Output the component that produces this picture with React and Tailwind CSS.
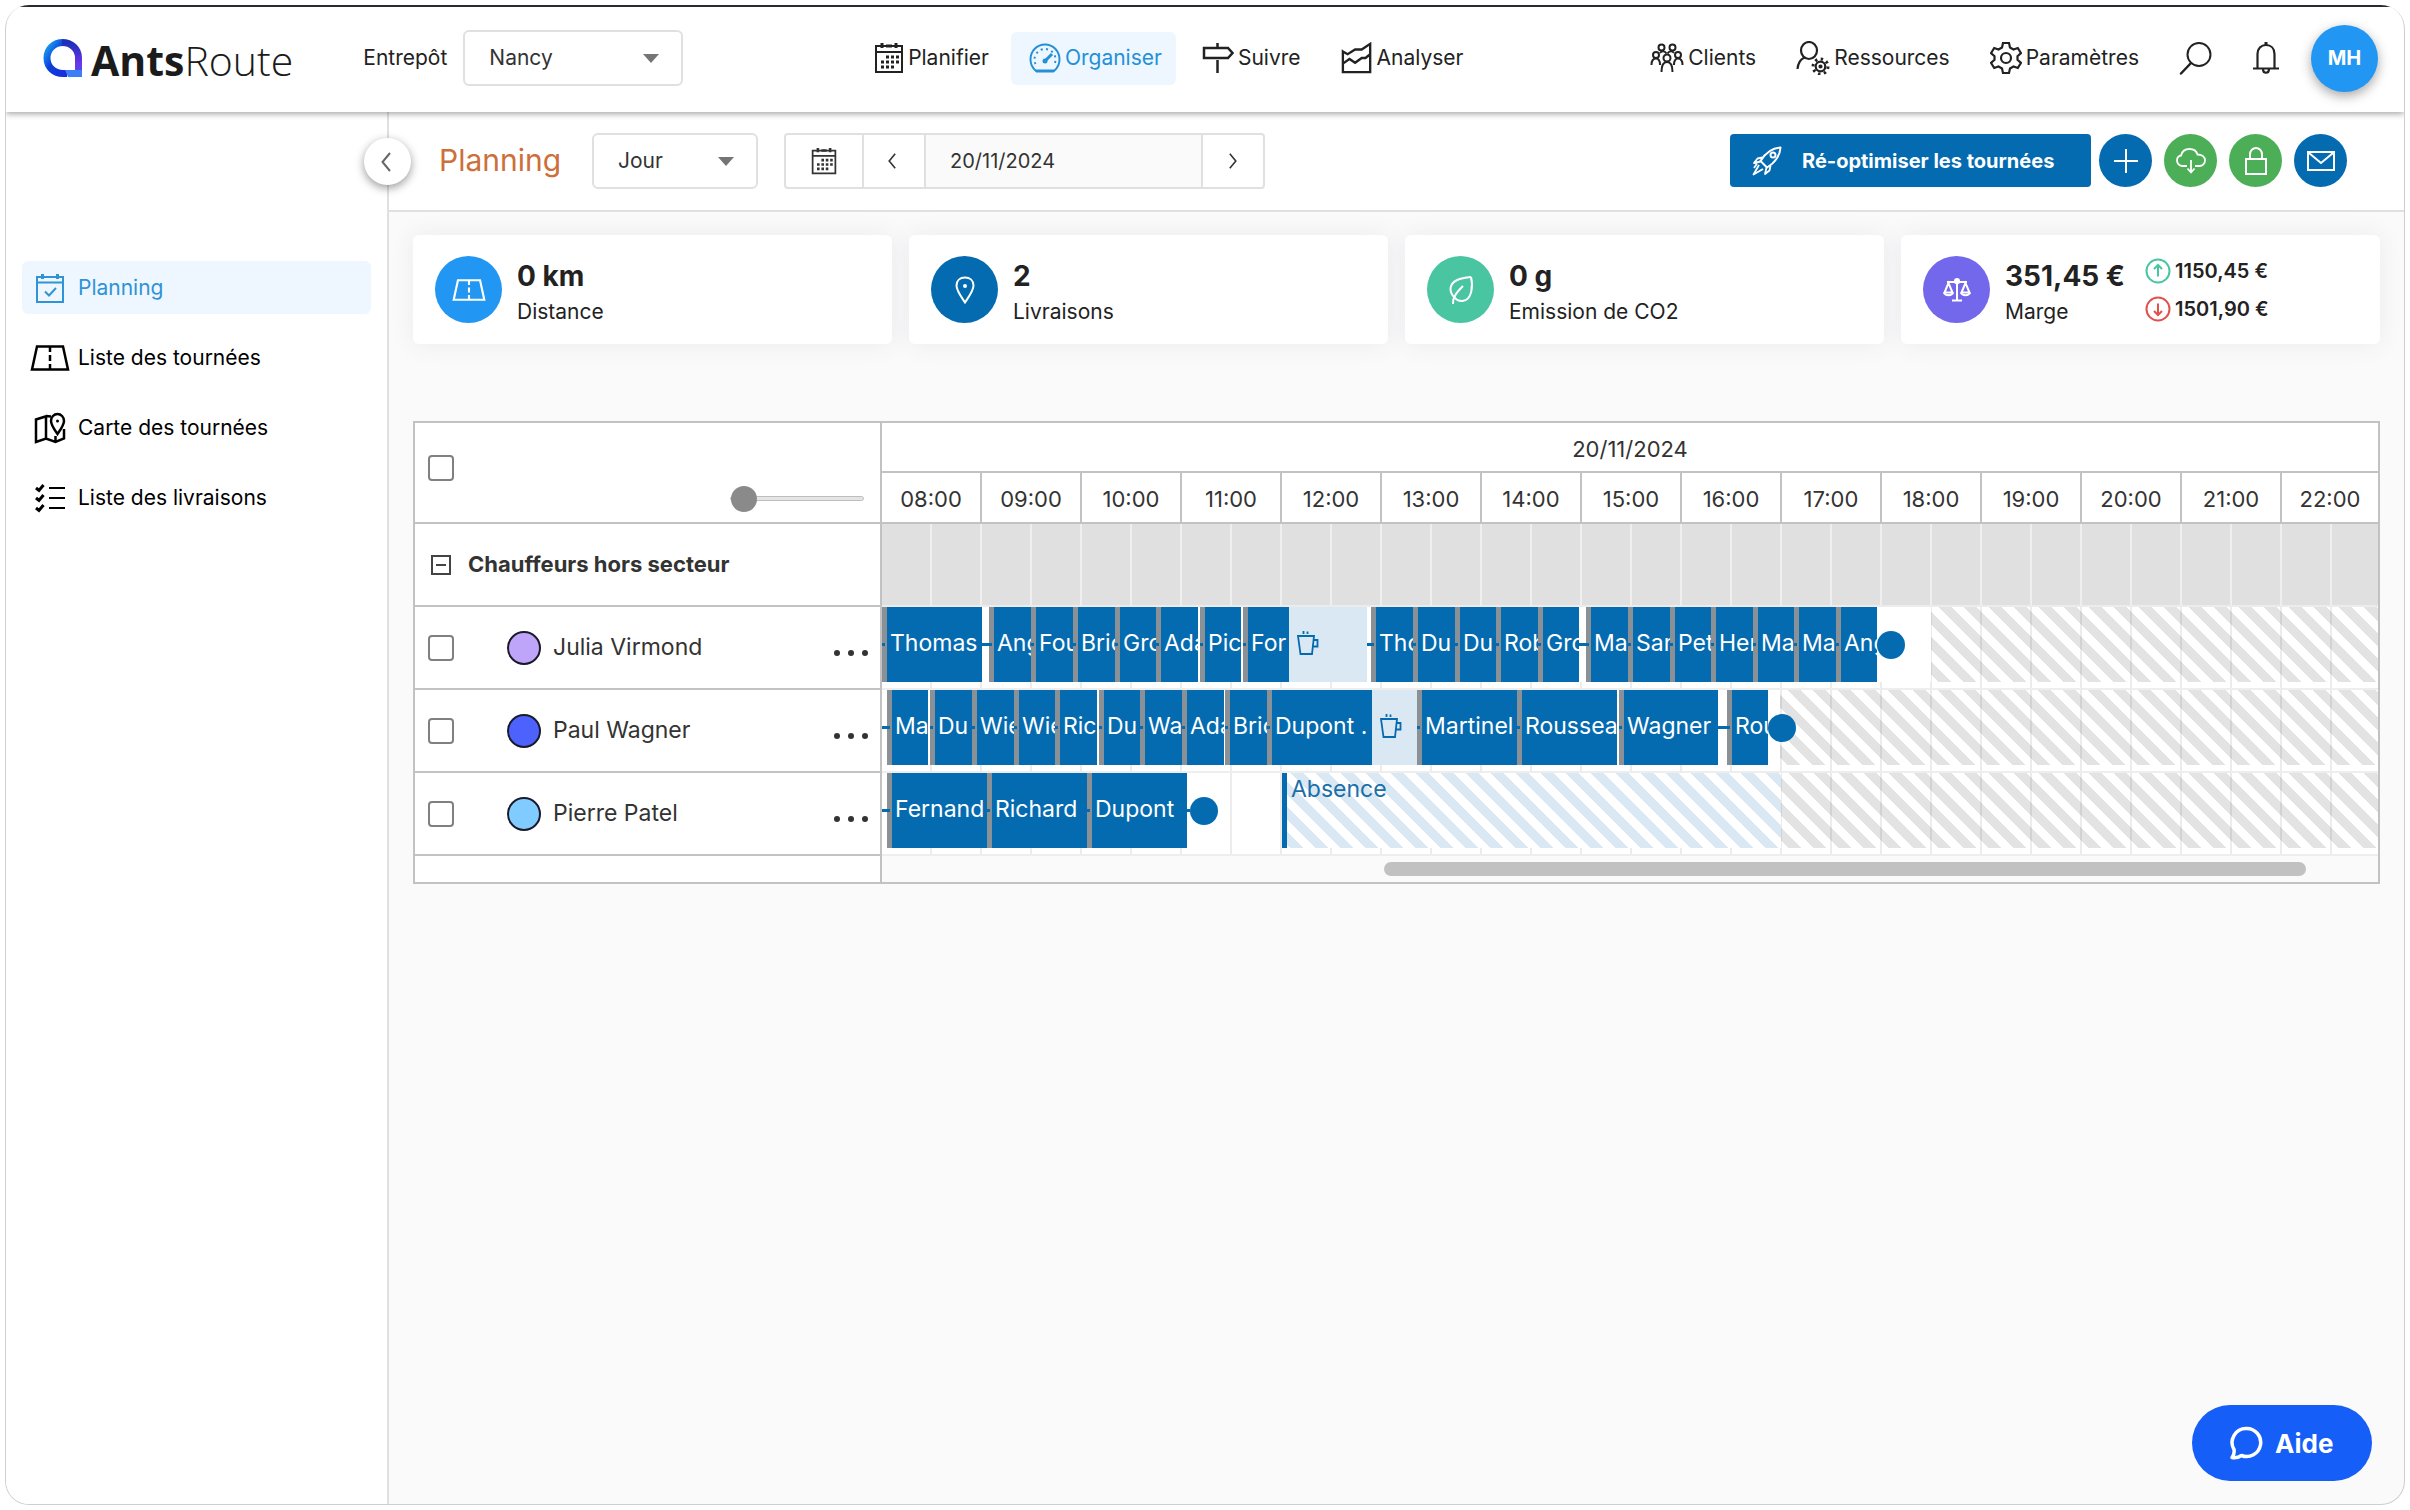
import React from "react";

const stroke = { fill: "none", stroke: "currentColor", strokeWidth: 2 };

function LogoMark() {
  return (
    <svg viewBox="0 0 40 40" className="h-10 w-10">
      <defs>
        <linearGradient id="markBlue" x1="0" y1="0" x2="1" y2="1">
          <stop offset="0" stopColor="#1aa5f5" />
          <stop offset="0.45" stopColor="#0b3fd8" />
          <stop offset="1" stopColor="#1b2be0" />
        </linearGradient>
        <linearGradient id="markViolet" x1="0" y1="0" x2="0" y2="1">
          <stop offset="0" stopColor="#1d2fb8" />
          <stop offset="0.6" stopColor="#6a35e8" />
          <stop offset="1" stopColor="#3f5bf5" />
        </linearGradient>
      </defs>
      <path d="M24 35.5H20C11 35.5 4 29 4 20S11 4.500 20 4.500" fill="none" stroke="url(#markBlue)" strokeWidth="7" />
      <path d="M19 4.500C28.500 4.500 35.500 11 35.500 20V39" fill="none" stroke="url(#markViolet)" strokeWidth="7" />
      <path d="M22 32H39V39H25Z" fill="#3d7df8" />
    </svg>
  );
}

function CalendarIcon({ className }) {
  return (
    <svg viewBox="0 0 30 32" className={className} {...stroke}>
      <path d="M2 4H28V30H2ZM2 10H28" />
      <path d="M8 1V6M22 1V6M12 4H18" strokeWidth="3" />
      <path d="M12 15H26M7 20H26M7 25H20" strokeWidth="3" strokeDasharray="3 2" />
    </svg>
  );
}

function GaugeIcon() {
  return (
    <svg viewBox="0 0 32 32" className="h-8 w-8" {...stroke}>
      <path d="M7 29C3.500 26 1.500 22 1.500 17.500C1.500 9 8 2.500 16 2.500S30.500 9 30.500 17.500C30.500 22 28.500 26 25 29Z" />
      <path d="M7 29H25" strokeWidth="3" />
      <path d="M6.500 22A10.500 10.500 0 1 1 25.500 22" strokeDasharray="2 3.500" />
      <path d="M16 19L23 12" strokeWidth="3" />
      <circle cx="16" cy="19" r="2.500" fill="currentColor" stroke="none" />
    </svg>
  );
}

function SignIcon() {
  return (
    <svg viewBox="0 0 32 32" className="h-8 w-8" {...stroke} strokeWidth="2.500">
      <path d="M2 6H26L30.500 11L26 16H2ZM15.500 1V6M15.500 18V31" />
    </svg>
  );
}

function ChartIcon() {
  return (
    <svg viewBox="0 0 34 32" className="h-8 w-8" {...stroke} strokeWidth="2.500">
      <path d="M2 9L7 12L15 7H22L31 1V31H2ZM2 22L9 17L15 21L22 16H26L31 12" />
    </svg>
  );
}

function PeopleIcon() {
  return (
    <svg viewBox="0 0 34 30" className="h-[30px] w-[34px]" {...stroke}>
      <circle cx="11.500" cy="4.500" r="3" />
      <circle cx="22.500" cy="4.500" r="3" />
      <circle cx="6" cy="12" r="3" />
      <circle cx="28" cy="12" r="3" />
      <circle cx="17" cy="15" r="3.500" />
      <path d="M1.500 22C1.500 18 3 15.500 6 15.500S10 18 10 22M32.500 22C32.500 18 31 15.500 28 15.500S24 18 24 22M11.500 29C11.500 23 13 19 17 19S22.500 23 22.500 29M10 10C12 7.500 15 8 16.500 10.500M24 10C22 7.500 19 8 17.500 10.500" />
    </svg>
  );
}

function UserGearIcon() {
  return (
    <svg viewBox="0 0 34 34" className="h-[34px] w-[34px]" {...stroke} strokeWidth="2.200">
      <ellipse cx="13" cy="9.500" rx="8" ry="8.500" />
      <path d="M1.500 28C2 22 4 18.500 8.500 16.500" />
      <circle cx="24.500" cy="25.500" r="4.800" />
      <circle cx="24.500" cy="25.500" r="7.500" strokeDasharray="2.400 3.490" strokeWidth="3" />
      <circle cx="24.500" cy="25.500" r="1" fill="currentColor" />
    </svg>
  );
}

function GearIcon() {
  return (
    <svg viewBox="0 0 32 34" className="h-[34px] w-8" {...stroke} strokeWidth="2.200">
      <path d="M13 2H19L20 6.500L23.500 8.500L27.800 7L31 12.200L27.500 15.200V18.800L31 21.800L27.800 27L23.500 25.500L20 27.500L19 32H13L12 27.500L8.500 25.500L4.200 27L1 21.800L4.500 18.800V15.200L1 12.200L4.200 7L8.500 8.500L12 6.500Z" />
      <circle cx="16" cy="17" r="5" />
    </svg>
  );
}

function SearchIcon() {
  return (
    <svg viewBox="0 0 34 34" className="h-[34px] w-[34px]" {...stroke} strokeLinecap="round">
      <circle cx="20" cy="13.500" r="11.500" />
      <path d="M12 22L2 32.500" strokeWidth="2.500" />
    </svg>
  );
}

function BellIcon() {
  return (
    <svg viewBox="0 0 26 34" className="h-[34px] w-[26px]" {...stroke} strokeWidth="2.200">
      <path d="M4.500 27V13C4.500 7.500 8 4 13 4S21.500 7.500 21.500 13V27M0 27.500H26M10 28C10 33 16 33 16 28" />
      <path d="M13 1V4" strokeWidth="3" />
    </svg>
  );
}

function PlanningIcon() {
  return (
    <svg viewBox="0 0 32 32" className="h-8 w-8" {...stroke}>
      <path d="M3 5H29V30H3ZM3 10.500H29M11 19.500L15 23.500L22 16" />
      <path d="M8.500 2V7M23.500 2V7" strokeWidth="3" />
    </svg>
  );
}

function RoadIcon({ className, weight }) {
  return (
    <svg viewBox="0 0 40 28" className={className} {...stroke} strokeWidth={weight}>
      <path d="M7 2.500H33L38 25.500H2ZM20 3V8M20 11V17M20 20V25" />
    </svg>
  );
}

function MapIcon() {
  return (
    <svg viewBox="0 0 32 32" className="h-8 w-8" {...stroke} strokeWidth="2.500">
      <path d="M13 4L2 7.500V30L12 26.500L21.500 30L30 26.500V17M12 4V26.500M17 4.500L12 4M21.500 24V30" />
      <path d="M23.500 22C20 17 17 13 17 9C17 5 20 2 23.500 2S30 5 30 9C30 13 27 17 23.500 22Z" />
      <circle cx="23.500" cy="9" r="1.500" fill="currentColor" stroke="none" />
    </svg>
  );
}

function ChecklistIcon() {
  return (
    <svg viewBox="0 0 32 32" className="h-8 w-8" {...stroke} strokeWidth="2.200">
      <path d="M15 6H31M15 16H31M15 26H31" />
      <path d="M2 6L5 8.500L9.500 3M2 16L5 18.500L9.500 13M2 26L5 28.500L9.500 23" strokeWidth="3" />
    </svg>
  );
}

function RocketIcon() {
  return (
    <svg viewBox="0 0 30 30" className="h-[30px] w-[30px]" {...stroke} strokeLinejoin="round">
      <path d="M28.500 1.500C20 2 14 6 8.500 15L15 21.500C24 16 28 10 28.500 1.500Z" />
      <circle cx="21" cy="9" r="2.500" />
      <path d="M10.500 11.500L5.500 12.500L2 17L8.500 15.500M18.500 19.500L17.500 24.500L13 28L14.500 21.500M7 19L1.500 28.500L11 23M5 17.500L2 22" strokeWidth="1.800" />
    </svg>
  );
}

function Chevron({ left, className }) {
  return (
    <svg viewBox="0 0 10 20" className={className} {...stroke}>
      <path d={left ? "M9 1L1.500 10L9 19" : "M1 1L8.500 10L1 19"} />
    </svg>
  );
}

function PlusIcon() {
  return (
    <svg viewBox="0 0 24 24" className="h-6 w-6" {...stroke}>
      <path d="M12 0V24M0 12H24" />
    </svg>
  );
}

function CloudIcon() {
  return (
    <svg viewBox="0 0 30 26" className="h-[26px] w-[30px]" {...stroke} strokeWidth="1.800">
      <path d="M11 18H6.500C3.500 18 1 15.500 1 12.500C1 10 2.500 8 5 7.500C6 3.500 9.500 1 13.500 1C17.500 1 20.500 3 21.500 6.500C25.500 6.500 29 8.500 29 12.500C29 15.500 26.500 18 23.500 18H19M15 12V24M11.500 20.500L15 24.500L18.500 20.500" />
    </svg>
  );
}

function LockIcon() {
  return (
    <svg viewBox="0 0 22 28" className="h-7 w-[22px]" {...stroke}>
      <path d="M1 12H21V27H1ZM5 12V7.500C5 4 7.500 1 11 1S17 4 17 7.500V12" />
    </svg>
  );
}

function MailIcon() {
  return (
    <svg viewBox="0 0 28 20" className="h-5 w-7" {...stroke}>
      <path d="M1 1H27V19H1ZM2 2L14 12L26 2" />
    </svg>
  );
}

function PinIcon() {
  return (
    <svg viewBox="0 0 20 28" className="h-7 w-5" {...stroke}>
      <path d="M10 26.500C5 19 1.500 14.500 1.500 9.500C1.500 4.500 5 1.500 10 1.500S18.500 4.500 18.500 9.500C18.500 14.500 15 19 10 26.500Z" />
      <circle cx="10" cy="10" r="2" fill="currentColor" stroke="none" />
    </svg>
  );
}

function LeafIcon() {
  return (
    <svg viewBox="0 0 26 30" className="h-[30px] w-[26px]" {...stroke}>
      <path d="M23 2C13 3 3 5 2.500 14C2.500 17 4 20 6.500 22.500M23 2C25 10 24.500 25 14.500 26C11.500 26.500 8.500 25 6.500 22.500M15 11C9 17 4.500 22 5 29" />
    </svg>
  );
}

function ScaleIcon() {
  return (
    <svg viewBox="0 0 28 24" className="h-6 w-7" {...stroke}>
      <path d="M14 2V22M9 22.500H19M4 4H11C12.500 5 15.500 5 17 4H24M5.500 5L1.500 14.500H9.500ZM22.500 5L18.500 14.500H26.500Z" />
      <path d="M1 14.500C2 18 9 18 10 14.500M18 14.500C19 18 26 18 27 14.500" />
      <circle cx="14" cy="3" r="2" />
    </svg>
  );
}

function ArrowCircle({ down, className }) {
  return (
    <svg viewBox="0 0 26 26" className={className} {...stroke}>
      <circle cx="13" cy="13" r="11.500" />
      <path d={down ? "M13 7.500V18.500M9 15L13 19L17 15" : "M13 18.500V7.500M9 11L13 7L17 11"} />
    </svg>
  );
}

function CupIcon() {
  return (
    <svg viewBox="0 0 22 26" className="mb-1 ml-2 h-[26px] w-[22px] shrink-0 text-[#056bb0]" {...stroke} strokeWidth="1.800">
      <path d="M1 6H17L15 24H3.500ZM16.500 10H20.500V16.500H16" />
      <path d="M6.500 1V4M10.500 1.500V4" />
    </svg>
  );
}

function Picker({ id, label, value, className }) {
  return (
    <div className={`relative ${className}`}>
      <select
        id={id}
        aria-label={label}
        defaultValue={value}
        className="h-14 w-full appearance-none rounded-md border-2 border-[#e0e0e0] bg-white pl-6 text-[21px] text-[#333]"
      >
        <option>{value}</option>
      </select>
      <svg viewBox="0 0 16 9" className="pointer-events-none absolute top-6 right-6 h-[9px] w-4">
        <path d="M0 0H16L8 9Z" fill="#757575" />
      </svg>
    </div>
  );
}

function NavItem({ icon, label, active }) {
  return (
    <a
      href="#"
      className={`flex h-[53px] items-center gap-1 rounded-md pr-3.5 pl-[18px] ${active ? "bg-[#eef7ff] text-[#2490d8]" : "text-[#222]"}`}
    >
      {icon}
      <span>{label}</span>
    </a>
  );
}

function TopLink({ icon, label }) {
  return (
    <a href="#" className="flex items-center gap-1 text-[#222]">
      {icon}
      <span>{label}</span>
    </a>
  );
}

function Header() {
  return (
    <header className="relative z-20 flex h-[107px] shrink-0 items-center justify-between border-t-2 border-[#2a2a30] bg-white pr-[26px] pb-[3px] pl-[37px] shadow-[0_2px_6px_rgba(0,0,0,0.35)]">
      <div className="flex items-center">
        <a href="#" aria-label="AntsRoute" className="flex items-center gap-2 font-['Open_Sans',sans-serif] text-[41px] leading-none text-[#1b1b1b]">
          <LogoMark />
          <span className="pt-1">
            <span className="font-bold">Ants</span>
            <span className="font-light">Route</span>
          </span>
        </a>
        <label htmlFor="depot" className="mr-4 ml-[70px] text-[#222]">Entrepôt</label>
        <Picker id="depot" label="Entrepôt" value="Nancy" className="w-[220px]" />
      </div>
      <nav className="flex items-center gap-2">
        <NavItem icon={<CalendarIcon className="h-8 w-[30px]" />} label="Planifier" />
        <NavItem icon={<GaugeIcon />} label="Organiser" active />
        <NavItem icon={<SignIcon />} label="Suivre" />
        <NavItem icon={<ChartIcon />} label="Analyser" />
      </nav>
      <div className="flex items-center gap-10">
        <TopLink icon={<PeopleIcon />} label="Clients" />
        <TopLink icon={<UserGearIcon />} label="Ressources" />
        <TopLink icon={<GearIcon />} label="Paramètres" />
        <button type="button" aria-label="Rechercher" className="text-[#222]"><SearchIcon /></button>
        <button type="button" aria-label="Notifications" className="text-[#222]"><BellIcon /></button>
        <button type="button" className="-ml-2 h-[67px] w-[67px] rounded-full bg-[#2196f3] text-[20px] font-bold text-white shadow-[0_4px_12px_rgba(0,0,0,0.35)]">MH</button>
      </div>
    </header>
  );
}

function SideItem({ icon, label, active }) {
  return (
    <a
      href="#"
      className={`flex h-[53px] items-center rounded-md px-2 ${active ? "bg-[#eef7ff] text-[#2f93d6]" : "text-black"}`}
    >
      <span className="mr-2 flex w-10 justify-center">{icon}</span>
      {label}
    </a>
  );
}

function Sidebar() {
  return (
    <aside className="relative w-[383px] shrink-0 border-r-2 border-[#e0e0e0] bg-white">
      <nav className="flex flex-col gap-[17px] pt-[149px] pr-4 pl-4">
        <SideItem icon={<PlanningIcon />} label="Planning" active />
        <SideItem icon={<RoadIcon className="h-7 w-10" weight="2.500" />} label="Liste des tournées" />
        <SideItem icon={<MapIcon />} label="Carte des tournées" />
        <SideItem icon={<ChecklistIcon />} label="Liste des livraisons" />
      </nav>
      <button
        type="button"
        aria-label="Replier le menu"
        className="absolute top-[26px] -right-6 z-10 flex h-[47px] w-[47px] items-center justify-center rounded-full bg-white pr-1 text-[#666] shadow-[0_3px_10px_rgba(0,0,0,0.4)]"
      >
        <Chevron left className="h-5 w-2.5" />
      </button>
    </aside>
  );
}

function RoundButton({ label, tone, children }) {
  return (
    <button type="button" aria-label={label} className={`flex h-[53px] w-[53px] items-center justify-center rounded-full text-white ${tone}`}>
      {children}
    </button>
  );
}

function Toolbar() {
  return (
    <div className="flex h-[100px] items-center justify-between border-b-2 border-[#e0e0e0] bg-white pr-[57px] pb-px pl-[50px]">
      <div className="flex items-center">
        <h1 className="w-[153px] text-[30px] text-[#cc6f3a]">Planning</h1>
        <Picker id="range" label="Période" value="Jour" className="w-[166px]" />
        <div className="ml-[26px] flex h-14 divide-x-2 divide-[#e0e0e0] overflow-hidden rounded-sm border-2 border-[#e0e0e0] text-[#333]">
          <button type="button" aria-label="Calendrier" className="flex w-[78px] items-center justify-center"><CalendarIcon className="h-7 w-7" /></button>
          <button type="button" aria-label="Jour précédent" className="flex w-[62px] items-center justify-center pr-1"><Chevron left className="h-4 w-2" /></button>
          <input aria-label="Date" defaultValue="20/11/2024" className="w-[277px] bg-[#fafafa] pl-6 text-[20px]" />
          <button type="button" aria-label="Jour suivant" className="flex w-[60px] items-center justify-center"><Chevron className="h-4 w-2" /></button>
        </div>
      </div>
      <div className="flex items-center">
        <button type="button" className="mr-2 flex h-[53px] w-[361px] items-center gap-5 rounded-sm bg-[#056bb0] pl-[22px] text-[20px] font-bold whitespace-nowrap text-white">
          <RocketIcon />
          Ré-optimiser les tournées
        </button>
        <div className="flex items-center gap-3">
          <RoundButton label="Ajouter" tone="bg-[#056bb0]"><PlusIcon /></RoundButton>
          <RoundButton label="Exporter" tone="bg-[#4caf57]"><CloudIcon /></RoundButton>
          <RoundButton label="Verrouiller" tone="bg-[#4caf57]"><LockIcon /></RoundButton>
          <RoundButton label="Envoyer" tone="bg-[#056bb0]"><MailIcon /></RoundButton>
        </div>
      </div>
    </div>
  );
}

function StatCard({ icon, tone, value, label, children }) {
  return (
    <div className="flex h-[109px] items-center rounded-md bg-white px-[22px] shadow-[0_0_24px_rgba(60,60,100,0.08)]">
      <div className={`mr-[15px] flex h-[67px] w-[67px] shrink-0 items-center justify-center rounded-full text-white ${tone}`}>{icon}</div>
      <div className="text-[#222]">
        <div className="pt-1 text-[28px] leading-9 font-bold">{value}</div>
        <div className="pt-1 leading-7">{label}</div>
      </div>
      {children}
    </div>
  );
}

function Stats() {
  return (
    <section className="grid grid-cols-4 gap-[17px]">
      <StatCard icon={<RoadIcon className="h-6 w-[34px]" weight="2.500" />} tone="bg-[#2196f3]" value="0 km" label="Distance" />
      <StatCard icon={<PinIcon />} tone="bg-[#056bb0]" value="2" label="Livraisons" />
      <StatCard icon={<LeafIcon />} tone="bg-[#49c5a2]" value="0 g" label="Emission de CO2" />
      <StatCard icon={<ScaleIcon />} tone="bg-[#7367eb]" value="351,45 €" label="Marge">
        <div className="ml-5 flex flex-col gap-2.5 text-[20px] font-semibold text-[#222]">
          <div className="flex items-center gap-1 leading-7"><ArrowCircle className="h-[26px] w-[26px] text-[#49c5a2]" />1150,45 €</div>
          <div className="flex items-center gap-1 leading-7"><ArrowCircle down className="h-[26px] w-[26px] text-[#e0524d]" />1501,90 €</div>
        </div>
      </StatCard>
    </section>
  );
}

const HOURS = ["08:00", "09:00", "10:00", "11:00", "12:00", "13:00", "14:00", "15:00", "16:00", "17:00", "18:00", "19:00", "20:00", "21:00", "22:00"];

// Each entry is [kind, width, label]; widths are in timeline pixels (100 per hour).
const DRIVERS = [
  {
    name: "Julia Virmond",
    dot: "bg-[#bfa5fa]",
    items: [
      ["stop", 100, "Thomas"], ["link", 7], ["stop", 42, "Ang"], ["stop", 42, "Fou"], ["stop", 42, "Bric"], ["stop", 41, "Gro"],
      ["stop", 42, "Ada"], ["gap", 2], ["stop", 41, "Pic"], ["gap", 2], ["stop", 46, "For"], ["break", 78], ["link", 4],
      ["stop", 42, "Tho"], ["stop", 42, "Du"], ["stop", 41, "Du"], ["stop", 42, "Rob"], ["stop", 41, "Gro"], ["link", 7],
      ["stop", 42, "Ma"], ["stop", 42, "San"], ["stop", 41, "Pet"], ["stop", 42, "Her"], ["stop", 41, "Ma"], ["stop", 42, "Ma"],
      ["stop", 41, "Ang"], ["end", 28], ["gap", 26], ["closed", 0],
    ],
  },
  {
    name: "Paul Wagner",
    dot: "bg-[#4d61fc]",
    items: [
      ["link", 5], ["stop", 41, "Ma"], ["gap", 2], ["stop", 42, "Du"], ["stop", 42, "Wie"], ["stop", 41, "Wie"], ["stop", 42, "Ric"],
      ["gap", 2], ["stop", 41, "Du"], ["stop", 42, "Wa"], ["stop", 42, "Ada"], ["gap", 1], ["stop", 42, "Bric"], ["stop", 105, "Dupont ."],
      ["break", 45], ["stop", 100, "Martinel"], ["stop", 100, "Roussea"], ["gap", 2], ["stop", 99, "Wagner"], ["link", 9],
      ["stop", 41, "Rou"], ["end", 12], ["closed", 0],
    ],
  },
  {
    name: "Pierre Patel",
    dot: "bg-[#80cbff]",
    items: [
      ["link", 5], ["stop", 100, "Fernand"], ["stop", 100, "Richard"], ["stop", 100, "Dupont"], ["link", 3], ["end", 28], ["open", 64],
      ["absence", 499, "Absence"], ["closed", 0],
    ],
  },
];

function TimelineItem({ kind, width, label }) {
  const size = { width };
  if (kind === "closed") {
    return <div className="min-w-0 flex-1 bg-[linear-gradient(45deg,rgba(0,0,0,0.11)_25%,transparent_25%,transparent_50%,rgba(0,0,0,0.11)_50%,rgba(0,0,0,0.11)_75%,transparent_75%)] bg-size-[25px_25px] bg-position-[8px_0px]" />;
  }
  if (kind === "absence") {
    return (
      <div style={size} className="shrink-0 border-l-[5px] border-[#056bb0] bg-white bg-[linear-gradient(45deg,#dae8f3_25%,transparent_25%,transparent_50%,#dae8f3_50%,#dae8f3_75%,transparent_75%)] bg-size-[25px_25px] bg-position-[4px_0px] pl-1 leading-8 text-[#1b6fa8]">
        {label}
      </div>
    );
  }
  if (kind === "open") return <div style={size} className="shrink-0" />;
  if (kind === "gap") return <div style={size} className="shrink-0 bg-white" />;
  if (kind === "link") {
    return (
      <div style={size} className="flex shrink-0 items-center bg-white">
        <div className="h-[3px] w-full bg-[#056bb0]" />
      </div>
    );
  }
  if (kind === "end") {
    return (
      <div style={size} className="z-10 flex shrink-0 items-center bg-white">
        <div className="h-7 w-7 shrink-0 rounded-full bg-[#056bb0]" />
      </div>
    );
  }
  if (kind === "break") {
    return (
      <div style={size} className="flex shrink-0 items-center bg-[#dae8f3]">
        <CupIcon />
      </div>
    );
  }
  return (
    <div style={size} className="flex shrink-0 items-center overflow-hidden bg-[#056bb0] whitespace-nowrap text-white">
      <div className="flex h-full w-[5px] shrink-0 items-center bg-[#8a9196]">
        <div className="h-[3px] w-[3px] bg-[#056bb0]" />
      </div>
      <span className="pb-0.5 pl-[3px]">{label}</span>
    </div>
  );
}

function Check({ label }) {
  return <input type="checkbox" aria-label={label} className="h-[26px] w-[26px] shrink-0 appearance-none rounded border-2 border-[#808080] bg-white" />;
}

function Schedule() {
  return (
    <section className="mt-[77px] flex border-2 border-[#c2c2c2] bg-white text-[23px] text-[#333]">
      <div className="w-[467px] shrink-0 border-r-2 border-[#c2c2c2]">
        <div className="flex h-[101px] justify-between border-b-2 border-[#c2c2c2] pr-4 pl-[13px]">
          <div className="pt-8"><Check label="Tout sélectionner" /></div>
          <input
            type="range"
            aria-label="Zoom"
            min="0"
            max="10"
            defaultValue="0"
            className="mt-[73px] h-[5px] w-[134px] appearance-none rounded-full border border-[#bdbdbd] bg-[#e4e4e4] [&::-webkit-slider-thumb]:h-[26px] [&::-webkit-slider-thumb]:w-[26px] [&::-webkit-slider-thumb]:appearance-none [&::-webkit-slider-thumb]:rounded-full [&::-webkit-slider-thumb]:bg-[#8a8a8a]"
          />
        </div>
        <div className="flex h-[83px] items-center border-b-2 border-[#c2c2c2] pl-4">
          <button type="button" aria-label="Réduire le groupe" className="mr-[17px] flex h-5 w-5 items-center justify-center border-2 border-[#444]">
            <span className="h-0.5 w-2.5 bg-[#444]" />
          </button>
          <span className="text-[22px] font-bold">Chauffeurs hors secteur</span>
        </div>
        {DRIVERS.map((d) => (
          <div key={d.name} className="flex h-[83px] items-center border-b-2 border-[#c2c2c2] pr-3 pl-[13px]">
            <Check label={d.name} />
            <span className={`mr-3 ml-[53px] h-[34px] w-[34px] rounded-full border-2 border-[#1a1a2a] ${d.dot}`} />
            <span className="flex-1">{d.name}</span>
            <button type="button" aria-label={`Actions pour ${d.name}`} className="flex gap-2 pt-2.5">
              <span className="h-1.5 w-1.5 rounded-full bg-[#333]" />
              <span className="h-1.5 w-1.5 rounded-full bg-[#333]" />
              <span className="h-1.5 w-1.5 rounded-full bg-[#333]" />
            </button>
          </div>
        ))}
        <div className="h-[26px]" />
      </div>
      <div className="min-w-0 flex-1 overflow-hidden">
        <div className="flex h-[50px] items-center justify-center border-b-2 border-[#c2c2c2] pt-1 text-[22px]">20/11/2024</div>
        <div className="flex h-[51px] overflow-hidden border-b-2 border-[#c2c2c2] text-[22px]">
          {HOURS.map((h) => (
            <div key={h} className="flex w-[100px] shrink-0 items-center justify-center border-r-2 border-[#c2c2c2] pt-1 last:w-24 last:border-r-0">{h}</div>
          ))}
        </div>
        <div className="h-[83px] border-b-2 border-[#ececec] bg-[#e0e0e0] bg-[repeating-linear-gradient(90deg,transparent_0,transparent_48px,#efefef_48px,#efefef_50px)]" />
        {DRIVERS.map((d) => (
          <div key={d.name} className="h-[83px] border-b-2 border-[#eeeeee] bg-[repeating-linear-gradient(90deg,transparent_0,transparent_48px,#ececec_48px,#ececec_50px)]">
            <div className="flex h-[75px]">
              {d.items.map(([kind, width, label], i) => (
                <TimelineItem key={i} kind={kind} width={width} label={label} />
              ))}
            </div>
          </div>
        ))}
        <div className="flex h-[26px] items-center bg-[#fafafa]">
          <div className="mr-[72px] ml-auto h-3.5 w-[922px] rounded-full bg-[#c1c1c1]" />
        </div>
      </div>
    </section>
  );
}

function HelpButton() {
  return (
    <button type="button" className="fixed right-[38px] bottom-[29px] flex h-[76px] w-[180px] items-center gap-3 rounded-full bg-[#155ef8] pl-[37px] text-[26px] font-bold text-white">
      <svg viewBox="0 0 34 34" className="h-[34px] w-[34px]" fill="none" stroke="currentColor" strokeWidth="3.500" strokeLinejoin="round">
        <path d="M17.500 2.500A14 14 0 1 1 12.500 29.500C9.500 31.500 6 32 3 31.500C5 29 5.500 26.500 5 23.500A14 14 0 0 1 17.500 2.500Z" />
      </svg>
      Aide
    </button>
  );
}

export default function App() {
  return (
    <div className="flex min-h-screen flex-col bg-white p-[5px] font-['Inter',sans-serif] text-[21px]">
      <div className="flex flex-1 flex-col overflow-hidden rounded-3xl border border-t-0 border-[#cfcfcf] bg-[#fafafa]">
        <Header />
        <div className="flex flex-1">
          <Sidebar />
          <main className="min-w-0 flex-1">
            <Toolbar />
            <div className="px-6 pt-[23px] pb-24">
              <Stats />
              <Schedule />
            </div>
          </main>
        </div>
      </div>
      <HelpButton />
    </div>
  );
}
